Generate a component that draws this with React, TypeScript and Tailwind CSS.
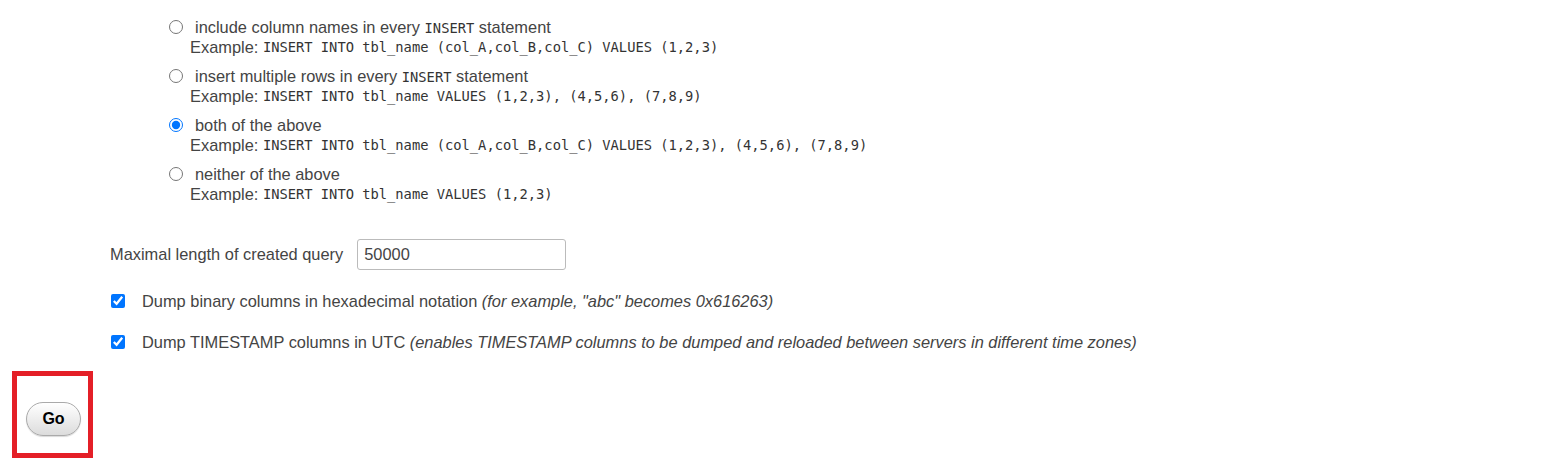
const options = [
  { label: 'include column names in every', code: 'INSERT', tail: 'statement', example: 'INSERT INTO tbl_name (col_A,col_B,col_C) VALUES (1,2,3)', checked: false },
  { label: 'insert multiple rows in every', code: 'INSERT', tail: 'statement', example: 'INSERT INTO tbl_name VALUES (1,2,3), (4,5,6), (7,8,9)', checked: false },
  { label: 'both of the above', example: 'INSERT INTO tbl_name (col_A,col_B,col_C) VALUES (1,2,3), (4,5,6), (7,8,9)', checked: true },
  { label: 'neither of the above', example: 'INSERT INTO tbl_name VALUES (1,2,3)', checked: false },
]

const mono = "font-['DejaVu_Sans_Mono',monospace] text-[13.75px] text-[#333]"

function App() {
  return (
    <div className="min-h-[473px] bg-white pt-[17px] font-['Liberation_Sans',Arial,sans-serif] text-[16.4px] text-[#444]">
      <div className="flex flex-col gap-[9px] pl-[169px]">
        {options.map((o) => (
          <div key={o.example + o.label}>
            <label className="flex h-5 items-center">
              <input type="radio" name="insert_syntax" defaultChecked={o.checked} className="m-0 mr-[12px] h-[14px] w-[14px]" />
              <span>
                {o.label}
                {o.code && (
                  <>
                    {' '}
                    <code className={mono}>{o.code}</code> {o.tail}
                  </>
                )}
              </span>
            </label>
            <div className="flex h-5 items-center whitespace-pre pl-[21px]">
              Example: <code className={mono}>{o.example}</code>
            </div>
          </div>
        ))}
      </div>

      <div className="mt-[35px] flex items-center pl-[110px]">
        <span className="mr-[14px]">Maximal length of created query</span>
        <input
          type="text"
          defaultValue="50000"
          className="h-[31px] w-[209px] rounded-[3px] border border-[#bbb] px-[6px] text-[16.4px] text-[#444] outline-none"
        />
      </div>

      <label className="mt-[21px] flex h-5 items-center pl-[111px]">
        <input type="checkbox" defaultChecked className="m-0 mr-[17px] h-[14px] w-[14px]" />
        <span>
          Dump binary columns in hexadecimal notation <i>(for example, "abc" becomes 0x616263)</i>
        </span>
      </label>

      <label className="mt-[21px] flex h-5 items-center pl-[111px]">
        <input type="checkbox" defaultChecked className="m-0 mr-[17px] h-[14px] w-[14px]" />
        <span>
          Dump TIMESTAMP columns in UTC{' '}
          <i>(enables TIMESTAMP columns to be dumped and reloaded between servers in different time zones)</i>
        </span>
      </label>

      <div className="ml-[12px] mt-[19px] h-[87px] w-[81px] border-[5px] border-[#e41f27] pl-[9px] pt-[26px]">
        <button
          type="button"
          className="h-[34px] w-[55px] rounded-full border border-[#aaa] bg-[linear-gradient(#ffffff,#dcdcdc)] text-[16px] font-bold text-black shadow-[0_1px_1px_rgba(0,0,0,0.15)]"
        >
          Go
        </button>
      </div>
    </div>
  )
}

export default App
